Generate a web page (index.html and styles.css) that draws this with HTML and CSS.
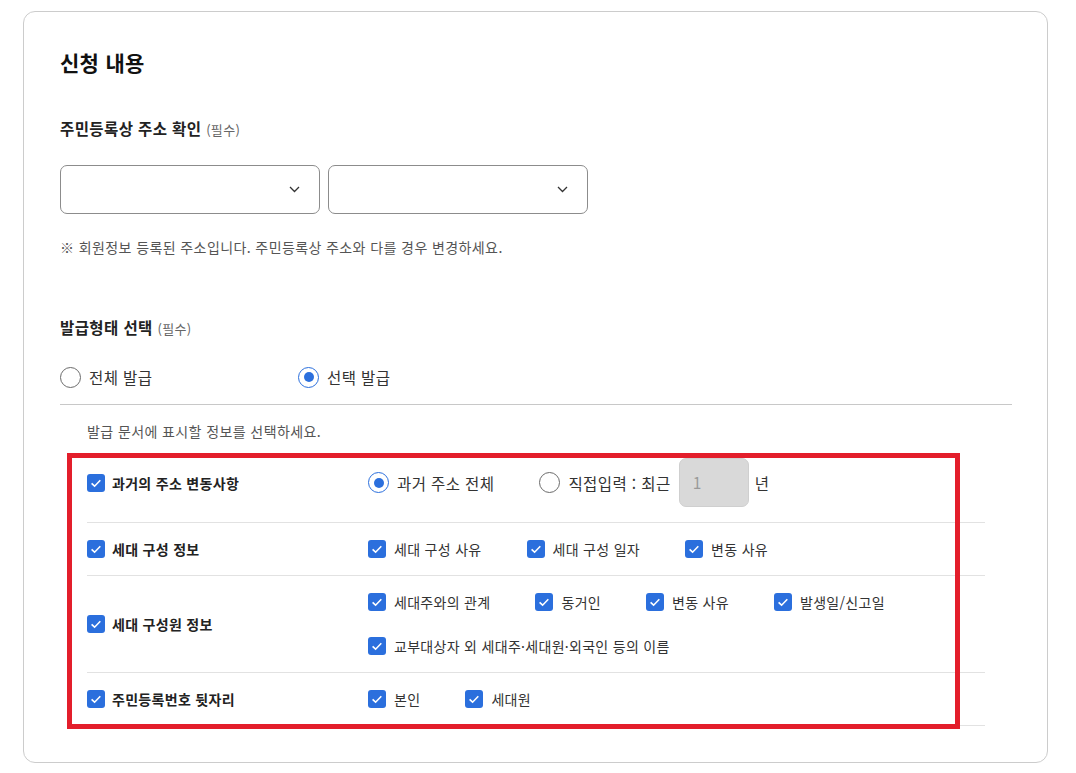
FILE: index.html
```html
<!DOCTYPE html>
<html lang="ko">

<head>
    <meta charset="UTF-8">
    <meta name="viewport" content="width=device-width, initial-scale=1.0">
    <title>신청 내용</title>
    <link rel="stylesheet" href="styles.css">
</head>

<body>
    <div class="card">
        <h2 class="title">신청 내용</h2>

        <h3 class="label first">주민등록상 주소 확인 <span class="req">(필수)</span></h3>
        <div class="selects">
            <div class="select"><svg width="11" height="7" viewBox="0 0 11 7"><polyline points="1,1 5.5,5.5 10,1" fill="none" stroke="#333" stroke-width="1.3"/></svg></div>
            <div class="select"><svg width="11" height="7" viewBox="0 0 11 7"><polyline points="1,1 5.5,5.5 10,1" fill="none" stroke="#333" stroke-width="1.3"/></svg></div>
        </div>
        <p class="note">※ 회원정보 등록된 주소입니다. 주민등록상 주소와 다를 경우 변경하세요.</p>

        <h3 class="label second">발급형태 선택 <span class="req">(필수)</span></h3>
        <div class="types">
            <label class="type wide"><span class="radio"></span>전체 발급</label>
            <label class="type"><span class="radio on"></span>선택 발급</label>
        </div>
        <div class="divider"></div>

        <div class="detail">
            <p class="hint">발급 문서에 표시할 정보를 선택하세요.</p>
            <div class="list">
                <div class="row row-input">
                    <div class="row-head"><span class="chk"><svg width="18" height="18" viewBox="0 0 18 18"><polyline points="4.6,9.3 7.6,12.2 13.3,6.3" fill="none" stroke="#fff" stroke-width="1.6"/></svg></span>과거의 주소 변동사항</div>
                    <div class="row-body">
                        <label class="pick"><span class="radio on"></span>과거 주소 전체</label>
                        <label class="pick"><span class="radio"></span>직접입력 : 최근<span class="years">1</span>년</label>
                    </div>
                </div>
                <div class="row">
                    <div class="row-head"><span class="chk"><svg width="18" height="18" viewBox="0 0 18 18"><polyline points="4.6,9.3 7.6,12.2 13.3,6.3" fill="none" stroke="#fff" stroke-width="1.6"/></svg></span>세대 구성 정보</div>
                    <div class="row-body">
                        <label class="opt"><span class="chk"><svg width="18" height="18" viewBox="0 0 18 18"><polyline points="4.6,9.3 7.6,12.2 13.3,6.3" fill="none" stroke="#fff" stroke-width="1.6"/></svg></span>세대 구성 사유</label>
                        <label class="opt"><span class="chk"><svg width="18" height="18" viewBox="0 0 18 18"><polyline points="4.6,9.3 7.6,12.2 13.3,6.3" fill="none" stroke="#fff" stroke-width="1.6"/></svg></span>세대 구성 일자</label>
                        <label class="opt"><span class="chk"><svg width="18" height="18" viewBox="0 0 18 18"><polyline points="4.6,9.3 7.6,12.2 13.3,6.3" fill="none" stroke="#fff" stroke-width="1.6"/></svg></span>변동 사유</label>
                    </div>
                </div>
                <div class="row">
                    <div class="row-head"><span class="chk"><svg width="18" height="18" viewBox="0 0 18 18"><polyline points="4.6,9.3 7.6,12.2 13.3,6.3" fill="none" stroke="#fff" stroke-width="1.6"/></svg></span>세대 구성원 정보</div>
                    <div class="row-body">
                        <label class="opt"><span class="chk"><svg width="18" height="18" viewBox="0 0 18 18"><polyline points="4.6,9.3 7.6,12.2 13.3,6.3" fill="none" stroke="#fff" stroke-width="1.6"/></svg></span>세대주와의 관계</label>
                        <label class="opt"><span class="chk"><svg width="18" height="18" viewBox="0 0 18 18"><polyline points="4.6,9.3 7.6,12.2 13.3,6.3" fill="none" stroke="#fff" stroke-width="1.6"/></svg></span>동거인</label>
                        <label class="opt"><span class="chk"><svg width="18" height="18" viewBox="0 0 18 18"><polyline points="4.6,9.3 7.6,12.2 13.3,6.3" fill="none" stroke="#fff" stroke-width="1.6"/></svg></span>변동 사유</label>
                        <label class="opt"><span class="chk"><svg width="18" height="18" viewBox="0 0 18 18"><polyline points="4.6,9.3 7.6,12.2 13.3,6.3" fill="none" stroke="#fff" stroke-width="1.6"/></svg></span>발생일/신고일</label>
                        <label class="opt"><span class="chk"><svg width="18" height="18" viewBox="0 0 18 18"><polyline points="4.6,9.3 7.6,12.2 13.3,6.3" fill="none" stroke="#fff" stroke-width="1.6"/></svg></span>교부대상자 외 세대주·세대원·외국인 등의 이름</label>
                    </div>
                </div>
                <div class="row">
                    <div class="row-head"><span class="chk"><svg width="18" height="18" viewBox="0 0 18 18"><polyline points="4.6,9.3 7.6,12.2 13.3,6.3" fill="none" stroke="#fff" stroke-width="1.6"/></svg></span>주민등록번호 뒷자리</div>
                    <div class="row-body">
                        <label class="opt"><span class="chk"><svg width="18" height="18" viewBox="0 0 18 18"><polyline points="4.6,9.3 7.6,12.2 13.3,6.3" fill="none" stroke="#fff" stroke-width="1.6"/></svg></span>본인</label>
                        <label class="opt"><span class="chk"><svg width="18" height="18" viewBox="0 0 18 18"><polyline points="4.6,9.3 7.6,12.2 13.3,6.3" fill="none" stroke="#fff" stroke-width="1.6"/></svg></span>세대원</label>
                    </div>
                </div>
                <!-- 강조 표시 -->
                <div class="mark"></div>
            </div>
        </div>
    </div>
</body>

</html>
```

FILE: styles.css
```css
* {
    margin: 0;
    padding: 0;
    box-sizing: border-box;
}

body {
    background-color: #fff;
    color: #222;
    font-family: "Noto Sans CJK KR", "Noto Sans", sans-serif;
}

.card {
    margin: 11px 28px 0 23px;
    height: 752px;
    padding: 36px 35px 0 36px;
    border: 1px solid #ccc;
    border-radius: 12px;
}

.title {
    font-size: 21px;
    line-height: 28px;
    letter-spacing: 0.3px;
    font-weight: 700;
    color: #111;
}

.label {
    height: 22px;
    font-size: 15.5px;
    line-height: 22px;
    letter-spacing: 0.4px;
    font-weight: 700;
    color: #222;
}

.label.first {
    margin-top: 41px;
}

.label.second {
    margin-top: 59px;
}

.req {
    font-size: 13px;
    line-height: 1;
    letter-spacing: 0.3px;
    font-weight: 400;
    color: #666;
}

.selects {
    display: flex;
    gap: 8px;
    margin-top: 26px;
}

.select {
    width: 260px;
    height: 49px;
    border: 1px solid #8c8c8c;
    border-radius: 7px;
    display: flex;
    align-items: center;
    justify-content: flex-end;
    padding-right: 19px;
}

.note {
    margin-top: 23px;
    font-size: 14px;
    line-height: 20px;
    letter-spacing: 0.4px;
    color: #555;
}

.types {
    display: flex;
    margin-top: 28px;
    height: 22px;
}

.type {
    display: flex;
    align-items: center;
    gap: 8px;
    height: 22px;
    line-height: 22px;
    font-size: 15.5px;
    letter-spacing: 0.4px;
    color: #333;
}

.type.wide {
    width: 238px;
}

.radio {
    width: 21px;
    height: 21px;
    border: 1px solid #6b6b6b;
    border-radius: 50%;
    display: flex;
    align-items: center;
    justify-content: center;
    flex-shrink: 0;
    background-color: #fff;
}

.radio.on {
    border: 1.5px solid #2b6fdd;
}

.radio.on::after {
    content: "";
    width: 10px;
    height: 10px;
    border-radius: 50%;
    background-color: #2b6fdd;
}

.divider {
    margin-top: 16px;
    height: 1px;
    background-color: #c8c8c8;
}

.detail {
    padding: 0 27px;
}

.hint {
    margin-top: 16px;
    font-size: 14px;
    line-height: 20px;
    letter-spacing: 0.4px;
    color: #555;
}

.list {
    position: relative;
    margin-top: 2px;
}

.row {
    display: flex;
    align-items: center;
    padding: 17px 0;
    border-bottom: 1px solid #e2e2e2;
}

.row.row-input {
    padding: 15px 0;
}

.row-head {
    width: 281px;
    height: 18px;
    line-height: 18px;
    flex-shrink: 0;
    display: flex;
    align-items: center;
    gap: 7px;
    font-size: 14px;
    letter-spacing: 0.3px;
    font-weight: 700;
    color: #222;
}

.row-body {
    flex: 1;
    display: flex;
    flex-wrap: wrap;
    align-items: center;
    column-gap: 45px;
    row-gap: 26px;
}

.chk {
    width: 18px;
    height: 18px;
    border-radius: 3px;
    background-color: #2b6fdd;
    flex-shrink: 0;
    display: block;
}

.chk svg {
    display: block;
}

.opt {
    display: flex;
    align-items: center;
    gap: 8px;
    height: 18px;
    line-height: 18px;
    font-size: 14px;
    letter-spacing: 0.3px;
    color: #333;
}

.pick {
    display: flex;
    align-items: center;
    gap: 8px;
    height: 49px;
    line-height: 22px;
    font-size: 15.5px;
    letter-spacing: 0.4px;
    color: #333;
}

.years {
    display: inline-block;
    width: 70px;
    height: 49px;
    line-height: 47px;
    padding-left: 13px;
    margin-right: -2px;
    background-color: #d9d9d9;
    border: 1px solid #cfcfcf;
    border-radius: 7px;
    color: #999;
}

.mark {
    position: absolute;
    left: -20px;
    right: 25px;
    top: 10px;
    bottom: -3px;
    border: 5px solid #e31e2b;
    pointer-events: none;
}
```
